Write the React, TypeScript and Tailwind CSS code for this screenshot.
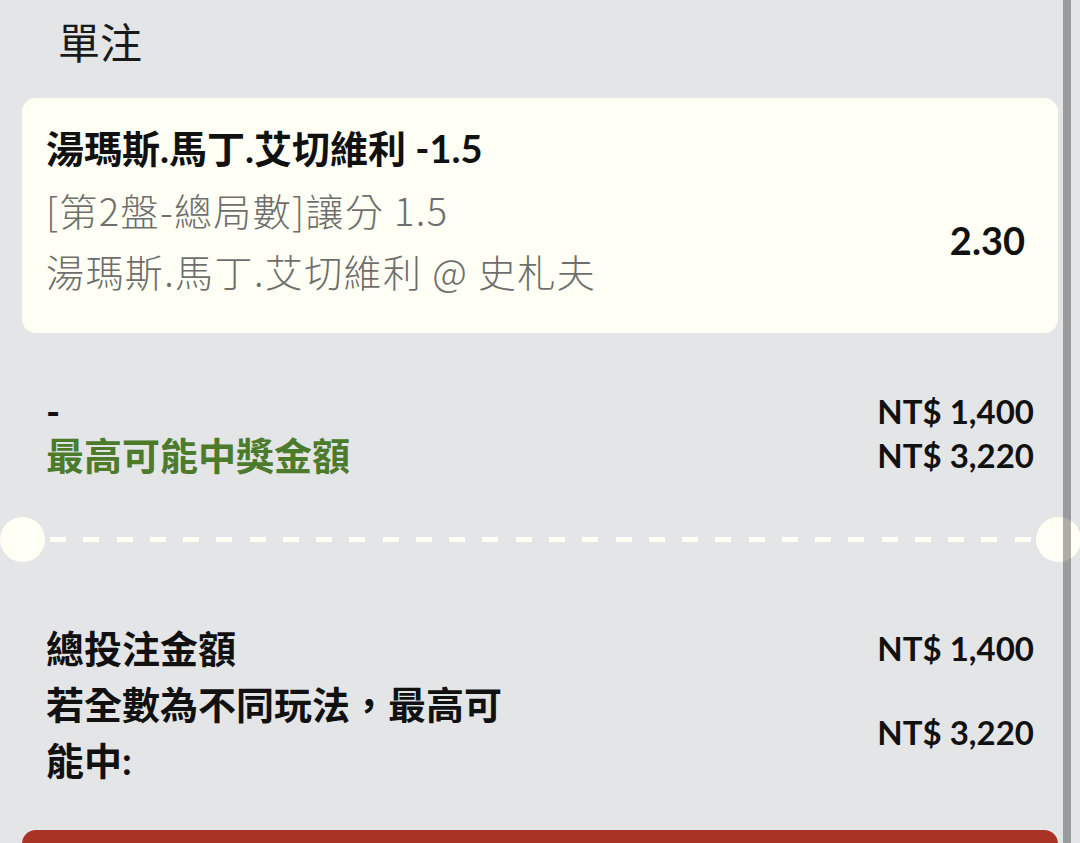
import React from 'react';

const dashes = Array.from({ length: 30 }, (_, i) => i);

function AmountRow({ label, amount, labelClass }: { label: string; amount: string; labelClass?: string }) {
  return (
    <div className="flex items-center justify-between h-[44px]">
      <span className={labelClass}>{label}</span>
      <span className="text-[33px] font-bold text-[#111]">{amount}</span>
    </div>
  );
}

export default function App() {
  return (
    <div className="relative h-[843px] w-[1080px] overflow-hidden bg-[#e4e5e7] font-['Lato','Noto_Sans_CJK_TC',sans-serif] text-[#111]">
      <div className="px-[22px]">
        {/* header */}
        <div className="pl-[36px] pt-[13px] h-[73px] text-[42px] leading-[60px] text-[#1a1a1a]">單注</div>

        {/* bet card */}
        <div className="mt-[25px] rounded-[14px] bg-[#fffff5] pl-[24px] pr-[33px] pt-[20px] pb-[32px] text-[38px] leading-[61px]">
          <div className="font-bold whitespace-nowrap">湯瑪斯.馬丁.艾切維利 -1.5</div>
          <div className="flex items-center justify-between">
            <div className="text-[#6e6e6c] font-['Noto_Sans_CJK_TC',sans-serif] font-light tracking-[1.4px]">
              <div className="whitespace-nowrap">[第2盤-總局數]讓分 1.5</div>
              <div className="whitespace-nowrap">湯瑪斯.馬丁.艾切維利 @ 史札夫</div>
            </div>
            <span className="font-bold">2.30</span>
          </div>
        </div>

        {/* stake + potential win */}
        <div className="mt-[56px] px-[24px] text-[38px] leading-[44px]">
          <AmountRow label="-" amount="NT$ 1,400" labelClass="font-bold" />
          <AmountRow label="最高可能中獎金額" amount="NT$ 3,220" labelClass="font-bold text-[#4b7b2b]" />
        </div>
      </div>

      {/* ticket divider */}
      <div className="mt-[40px] flex items-center">
        <div className="h-[45px] w-[45px] shrink-0 rounded-full bg-[#fffff5]" />
        <div className="flex flex-1 justify-between px-[5px]">
          {dashes.map((i) => (
            <div key={i} className="h-[5px] w-[16px] bg-[#fffff5]" />
          ))}
        </div>
        <div className="h-[45px] w-[45px] shrink-0 rounded-full bg-[#fffff5] -mr-[1px]" />
      </div>

      <div className="px-[22px]">
        {/* totals */}
        <div className="mt-[58px] px-[24px] text-[38px] font-bold leading-[56px]">
          <div className="flex items-center justify-between">
            <span>總投注金額</span>
            <span className="text-[33px]">NT$ 1,400</span>
          </div>
          <div className="flex items-center justify-between">
            <span className="max-w-[480px]">若全數為不同玩法，最高可能中:</span>
            <span className="text-[33px]">NT$ 3,220</span>
          </div>
        </div>

        {/* place bet button */}
        <div className="mt-[42px] h-[70px] rounded-t-[14px] bg-[#a83224]" />
      </div>

      {/* scrollbar */}
      <div className="absolute right-[9px] top-0 bottom-0 w-[8px] bg-black/[0.32]" />
    </div>
  );
}
